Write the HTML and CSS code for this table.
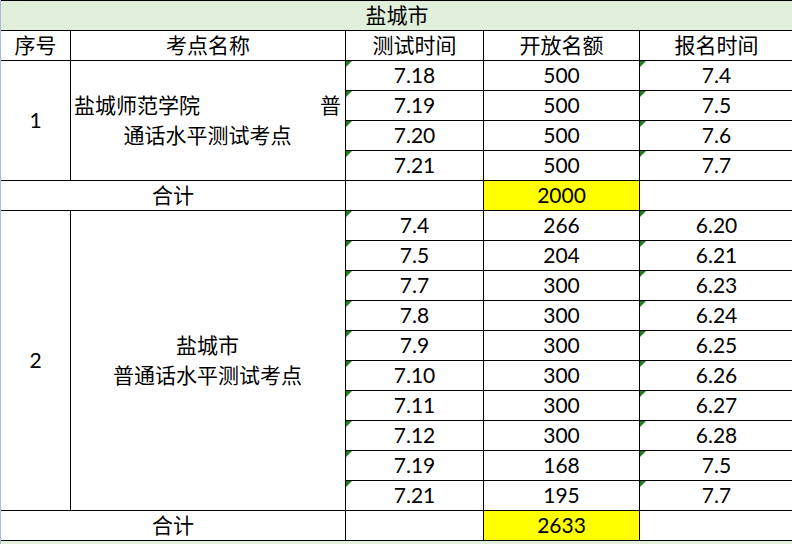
FILE: index.html
```html
<!DOCTYPE html>
<html lang="zh">
<head>
<meta charset="utf-8">
<title>盐城市</title>
<link rel="stylesheet" href="styles.css">
</head>
<body>
<div class="sheet">
  <div class="grid">
    <div class="cell title">盐城市</div>

    <div class="cell">序号</div>
    <div class="cell">考点名称</div>
    <div class="cell">测试时间</div>
    <div class="cell">开放名额</div>
    <div class="cell">报名时间</div>

    <div class="cell span4">1</div>
    <div class="cell span4 name">
      <div class="name-box">
        <div class="line split"><span>盐城师范学院</span><span>普</span></div>
        <div class="line">通话水平测试考点</div>
      </div>
    </div>
    <div class="cell tri">7.18</div><div class="cell">500</div><div class="cell tri">7.4</div>
    <div class="cell tri">7.19</div><div class="cell">500</div><div class="cell tri">7.5</div>
    <div class="cell tri">7.20</div><div class="cell">500</div><div class="cell tri">7.6</div>
    <div class="cell tri">7.21</div><div class="cell">500</div><div class="cell tri">7.7</div>

    <div class="cell wide">合计</div>
    <div class="cell"></div>
    <div class="cell total">2000</div>
    <div class="cell"></div>

    <div class="cell span10">2</div>
    <div class="cell span10 name">
      <div class="name-box centered">
        <div class="line">盐城市</div>
        <div class="line">普通话水平测试考点</div>
      </div>
    </div>
    <div class="cell tri">7.4</div><div class="cell">266</div><div class="cell tri">6.20</div>
    <div class="cell tri">7.5</div><div class="cell">204</div><div class="cell tri">6.21</div>
    <div class="cell tri">7.7</div><div class="cell">300</div><div class="cell tri">6.23</div>
    <div class="cell tri">7.8</div><div class="cell">300</div><div class="cell tri">6.24</div>
    <div class="cell tri">7.9</div><div class="cell">300</div><div class="cell tri">6.25</div>
    <div class="cell tri">7.10</div><div class="cell">300</div><div class="cell tri">6.26</div>
    <div class="cell tri">7.11</div><div class="cell">300</div><div class="cell tri">6.27</div>
    <div class="cell tri">7.12</div><div class="cell">300</div><div class="cell tri">6.28</div>
    <div class="cell tri">7.19</div><div class="cell">168</div><div class="cell tri">7.5</div>
    <div class="cell tri">7.21</div><div class="cell">195</div><div class="cell tri">7.7</div>

    <div class="cell wide">合计</div>
    <div class="cell"></div>
    <div class="cell total">2633</div>
    <div class="cell"></div>
  </div>
  <div class="after"></div>
</div>
</body>
</html>
```

FILE: styles.css
```css
html, body {
  margin: 0;
  padding: 0;
  background: #ffffff;
  overflow: hidden;
}

.sheet {
  width: 800px;
  border-left: 1px solid #a9bbd5;
  font-family: "Lato", "Noto Sans CJK SC", sans-serif;
  font-size: 21px;
  color: #000000;
}

.grid {
  display: grid;
  grid-template-columns: 69px 274px 137px 155px 153px;
  grid-auto-rows: 29px;
  gap: 1px;
  padding: 1px 1px 1px 0;
  background: #000000;
  width: max-content;
}

.cell {
  position: relative;
  background: #ffffff;
  display: flex;
  align-items: center;
  justify-content: center;
  line-height: 29px;
  padding-bottom: 2px;
  box-sizing: border-box;
  white-space: nowrap;
}

.title {
  grid-column: span 5;
  background: #e2efda;
}

.span4 {
  grid-row: span 4;
}

.span10 {
  grid-row: span 10;
}

.wide {
  grid-column: span 2;
}

.total {
  background: #ffff00;
}

.name-box {
  width: 100%;
  padding: 0 4px 0 3px;
  box-sizing: border-box;
  text-align: center;
}

.line {
  line-height: 30px;
}

.split {
  display: flex;
  justify-content: space-between;
}

.tri::before {
  content: "";
  position: absolute;
  left: 0;
  top: 0;
  width: 0;
  height: 0;
  border-top: 6px solid #1e7e1e;
  border-right: 6px solid transparent;
}

.after {
  height: 20px;
  background: #e2efda;
}
```
